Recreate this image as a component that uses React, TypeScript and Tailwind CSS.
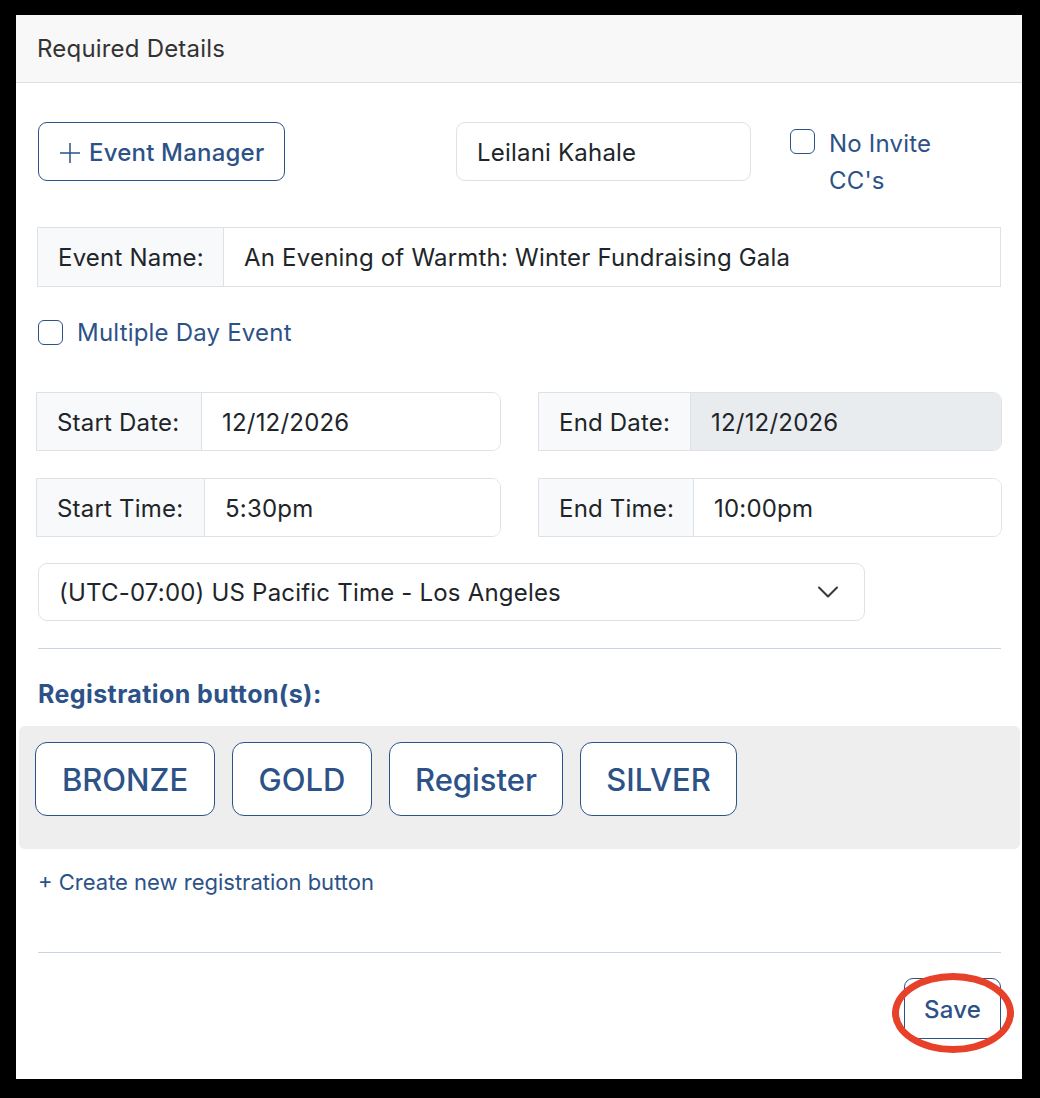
import React from "react";

const font = { fontFamily: "Inter, 'Noto Sans', 'Liberation Sans', sans-serif" };

function Group({
  label,
  value,
  labelW,
  disabled,
  rounded,
  h,
}: {
  label: string;
  value: string;
  labelW: string;
  disabled?: boolean;
  rounded?: boolean;
  h: string;
}) {
  return (
    <div
      className={`flex ${h} border border-[#dee2e6] ${rounded ? "rounded-r-[9px]" : ""} overflow-hidden`}
    >
      <div
        className={`${labelW} shrink-0 flex items-center pl-[20px] pt-[2px] bg-[#f8f9fa] border-r border-[#dee2e6] text-[24px] tracking-[0.2px] text-[#212529]`}
      >
        {label}
      </div>
      <div
        className={`flex-1 flex items-center pl-[20px] pt-[2px] text-[24px] tracking-[0.2px] text-[#212529] ${disabled ? "bg-[#e9ecef]" : "bg-white"}`}
      >
        {value}
      </div>
    </div>
  );
}

function Check() {
  return <div className="w-[25px] h-[25px] shrink-0 rounded-[6px] border border-[#2c5288] bg-white" />;
}

export default function App() {
  const regs = [
    { t: "BRONZE", w: "w-[180px]" },
    { t: "GOLD", w: "w-[140px]" },
    { t: "Register", w: "w-[174px]" },
    { t: "SILVER", w: "w-[157px]" },
  ];
  return (
    <div className="w-[1040px] h-[1098px] bg-black pl-[16px] pt-[15px] pr-[18px] pb-[19px]" style={font}>
      <div className="w-full h-full bg-white flex flex-col">
        <div className="h-[68px] shrink-0 flex items-center pl-[21px] bg-[#f8f8f8] border-b border-[#dfdfdf] text-[24px] tracking-[0.2px] text-[#333333]">
          Required Details
        </div>
        <div className="pl-[22px] pr-[21px] pt-[39px] flex flex-col relative flex-1">
          {/* row 1 */}
          <div className="flex items-start h-[76px]">
            <button className="w-[247px] h-[59px] shrink-0 flex items-center pl-[20px] pt-[2px] gap-[8px] rounded-[9px] border border-[#2c5288] text-[#2c5288] text-[24px] tracking-[0.2px] font-medium">
              <svg width="22" height="22" viewBox="0 0 22 22" className="shrink-0">
                <path d="M11 1v20M1 11h20" stroke="#2c5288" strokeWidth="1.5" fill="none" />
              </svg>
              Event Manager
            </button>
            <div className="ml-[171px] w-[295px] h-[59px] shrink-0 flex items-center pl-[20px] pt-[2px] rounded-[9px] border border-[#dee2e6] text-[24px] tracking-[0.2px] text-[#212529]">
              Leilani Kahale
            </div>
            <div className="ml-[39px] mt-[3px] flex items-start gap-[14px]">
              <div className="mt-[4px]">
                <Check />
              </div>
              <div className="w-[120px] text-[24px] tracking-[0.2px] leading-[37px] text-[#2c5288]">No Invite CC's</div>
            </div>
          </div>

          {/* Event name */}
          <div className="mt-[29px] -ml-px">
            <Group label="Event Name:" value="An Evening of Warmth: Winter Fundraising Gala" labelW="w-[186px]" h="h-[60px]" />
          </div>

          {/* multiple day */}
          <div className="mt-[27px] h-[36px] flex items-center gap-[14px]">
            <Check />
            <span className="text-[24px] tracking-[0.2px] text-[#2c5288] pt-[1px]">Multiple Day Event</span>
          </div>

          {/* dates */}
          <div className="mt-[42px] -ml-[2px] grid grid-cols-[465px_464px] gap-x-[37px] gap-y-[27px]">
            <Group label="Start Date:" value="12/12/2026" labelW="w-[165px]" h="h-[59px]" rounded />
            <Group label="End Date:" value="12/12/2026" labelW="w-[152px]" h="h-[59px]" rounded disabled />
            <Group label="Start Time:" value="5:30pm" labelW="w-[168px]" h="h-[59px]" rounded />
            <Group label="End Time:" value="10:00pm" labelW="w-[155px]" h="h-[59px]" rounded />
          </div>

          {/* timezone */}
          <div className="mt-[26px] w-[827px] h-[58px] flex items-center justify-between pl-[20px] pr-[24px] rounded-[9px] border border-[#dee2e6] text-[24px] tracking-[0.2px] text-[#212529]">
            <span className="pt-[2px]">(UTC-07:00) US Pacific Time - Los Angeles</span>
            <svg width="24" height="24" viewBox="0 0 16 16">
              <path d="m2 5 6 6 6-6" stroke="#343a40" strokeWidth="1.4" fill="none" strokeLinecap="round" strokeLinejoin="round" />
            </svg>
          </div>

          <div className="mt-[27px] h-px bg-[#c9d4e3]" />

          <div className="mt-[27px] h-[36px] flex items-center pt-[2px] text-[25px] tracking-[0.4px] font-bold text-[#2c5288]">
            Registration button(s):
          </div>

          <div className="mt-[14px] -mx-[19px] h-[123px] rounded-[6px] bg-[#eeeeee] pl-[16px] pt-[16px] flex items-start gap-[17px]">
            {regs.map((r) => (
              <button
                key={r.t}
                className={`${r.w} h-[74px] flex items-center justify-center pt-[2px] rounded-[12px] border border-[#2c5288] bg-white text-[31px] font-medium text-[#2c5288]`}
              >
                {r.t}
              </button>
            ))}
          </div>

          <div className="mt-[18px] h-[30px] flex items-center pt-[1px] text-[22px] text-[#2c5288]">
            + Create new registration button
          </div>

          <div className="mt-[55px] h-px bg-[#c9d4e3]" />

          <div className="mt-[25px] flex justify-end">
            <div className="relative">
              <button className="w-[97px] h-[61px] flex items-center justify-center pt-[2px] rounded-[9px] border border-[#2c5288] bg-white text-[24px] tracking-[0.2px] font-medium text-[#2c5288]">
                Save
              </button>
              <div className="absolute left-[-12px] top-[-5px] w-[122px] h-[80px] rounded-[50%] border-[7px] border-[#e8412a]" />
            </div>
          </div>
        </div>
      </div>
    </div>
  );
}
